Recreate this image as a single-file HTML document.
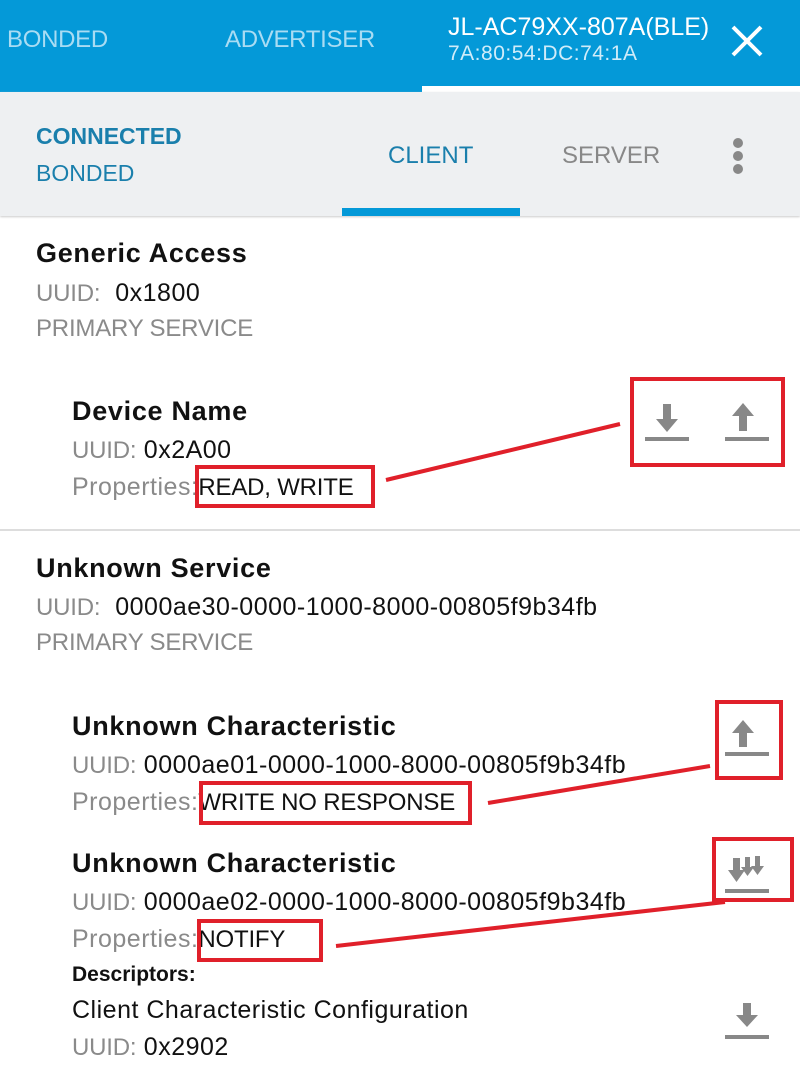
<!DOCTYPE html><html><head><meta charset="utf-8"><style>
body{margin:0;width:800px;height:1066px;overflow:hidden;background:#fff;font-family:"Liberation Sans",sans-serif;position:relative}
.a{position:absolute;white-space:nowrap}
.h{font-size:27px;color:#111;font-weight:bold;letter-spacing:0.7px}
.t{font-size:25px;color:#111;letter-spacing:0.5px}
.g{color:#8a8a8a}
.c{font-size:24px;letter-spacing:-0.2px}
</style></head><body>
<div class="a" style="left:0;top:0;width:800px;height:92px;background:#0499d8"></div>
<div class="a" style="left:422px;top:86px;width:378px;height:6px;background:#fff"></div>
<div class="a" style="left:7px;top:26px;font-size:24px;color:#a9dcf3;letter-spacing:-0.3px">BONDED</div>
<div class="a" style="left:225px;top:26px;font-size:24px;color:#a9dcf3;letter-spacing:-0.3px">ADVERTISER</div>
<div class="a" style="left:448px;top:13px;font-size:25px;color:#fff">JL-AC79XX-807A(BLE)</div>
<div class="a" style="left:448px;top:42px;font-size:21px;color:#d0ecf9;letter-spacing:0.5px">7A:80:54:DC:74:1A</div>
<svg class="a" style="left:730px;top:24px" width="34" height="34"><path d="M3 3L31 31M31 3L3 31" stroke="#fff" stroke-width="4"/></svg>
<div class="a" style="left:0;top:92px;width:800px;height:124px;background:#eef0f2;box-shadow:0 1px 2px #ccc"></div>
<div class="a" style="left:36px;top:123px;font-size:23px;font-weight:bold;color:#1a7fac">CONNECTED</div>
<div class="a" style="left:36px;top:160px;font-size:23px;color:#1a7fac">BONDED</div>
<div class="a" style="left:388px;top:142px;font-size:24px;color:#1a7fac">CLIENT</div>
<div class="a" style="left:562px;top:142px;font-size:24px;color:#888">SERVER</div>
<svg class="a" style="left:731px;top:136px" width="14" height="40"><circle cx="7" cy="7" r="5" fill="#888"/><circle cx="7" cy="20" r="5" fill="#888"/><circle cx="7" cy="33" r="5" fill="#888"/></svg>
<div class="a" style="left:342px;top:208px;width:178px;height:8px;background:#0499d8"></div>

<div class="a h" style="left:36px;top:238px">Generic Access</div>
<div class="a t" style="left:36px;top:279px"><span class="g c">UUID:</span>&nbsp; 0x1800</div>
<div class="a t g c" style="left:36px;top:315px">PRIMARY SERVICE</div>
<div class="a h" style="left:72px;top:396px">Device Name</div>
<div class="a t" style="left:72px;top:436px"><span class="g c">UUID:</span> 0x2A00</div>
<div class="a t" style="left:72px;top:473px"><span class="g">Properties:</span><span class="c">READ, WRITE</span></div>
<div class="a" style="left:0;top:529px;width:800px;height:2px;background:#ddd"></div>

<div class="a h" style="left:36px;top:553px">Unknown Service</div>
<div class="a t" style="left:36px;top:593px"><span class="g c">UUID:</span>&nbsp; 0000ae30-0000-1000-8000-00805f9b34fb</div>
<div class="a t g c" style="left:36px;top:629px">PRIMARY SERVICE</div>
<div class="a h" style="left:72px;top:711px">Unknown Characteristic</div>
<div class="a t" style="left:72px;top:751px"><span class="g c">UUID:</span> 0000ae01-0000-1000-8000-00805f9b34fb</div>
<div class="a t" style="left:72px;top:788px"><span class="g">Properties:</span><span class="c">WRITE NO RESPONSE</span></div>
<div class="a h" style="left:72px;top:848px">Unknown Characteristic</div>
<div class="a t" style="left:72px;top:888px"><span class="g c">UUID:</span> 0000ae02-0000-1000-8000-00805f9b34fb</div>
<div class="a t" style="left:72px;top:925px"><span class="g">Properties:</span><span class="c">NOTIFY</span></div>
<div class="a" style="left:72px;top:963px;font-size:21px;font-weight:bold;color:#111">Descriptors:</div>
<div class="a t" style="left:72px;top:996px">Client Characteristic Configuration</div>
<div class="a t" style="left:72px;top:1033px"><span class="g c">UUID:</span> 0x2902</div>

<svg class="a" style="left:0;top:0" width="800" height="1066">
<g fill="#888">
<path d="M663 404h8v15h7l-11 13-11-13h7z"/><rect x="645" y="437" width="44" height="4"/>
<path d="M743 403l11 13h-7v15h-8v-15h-7z"/><rect x="725" y="437" width="44" height="4"/>
<path d="M743 720l11 13h-7v14h-8v-14h-7z"/><rect x="725" y="752" width="44" height="4"/>
<path d="M733 858h7v12h5l-8.5 12-8.5-12h5z"/><path d="M745 857h5v10h4l-6.5 9-6.5-9h4z"/><path d="M755 856h5v10h4l-6.5 9-6.5-9h4z"/><rect x="725" y="889" width="44" height="4"/>
<path d="M743 1003h8v12h7l-11 12-11-12h7z"/><rect x="725" y="1035" width="44" height="4"/>
</g>
<g stroke="#e0202a" stroke-width="4" fill="none">
<rect x="632" y="379" width="151" height="86"/>
<rect x="197" y="467" width="176" height="39"/>
<path d="M386 480L620 424"/>
<rect x="717" y="702" width="64" height="76"/>
<rect x="201" y="783" width="269" height="40"/>
<path d="M488 803L710 766"/>
<rect x="714" y="839" width="78" height="61"/>
<rect x="199" y="921" width="122" height="39"/>
<path d="M336 946L725 902"/>
</g></svg>
</body></html>
